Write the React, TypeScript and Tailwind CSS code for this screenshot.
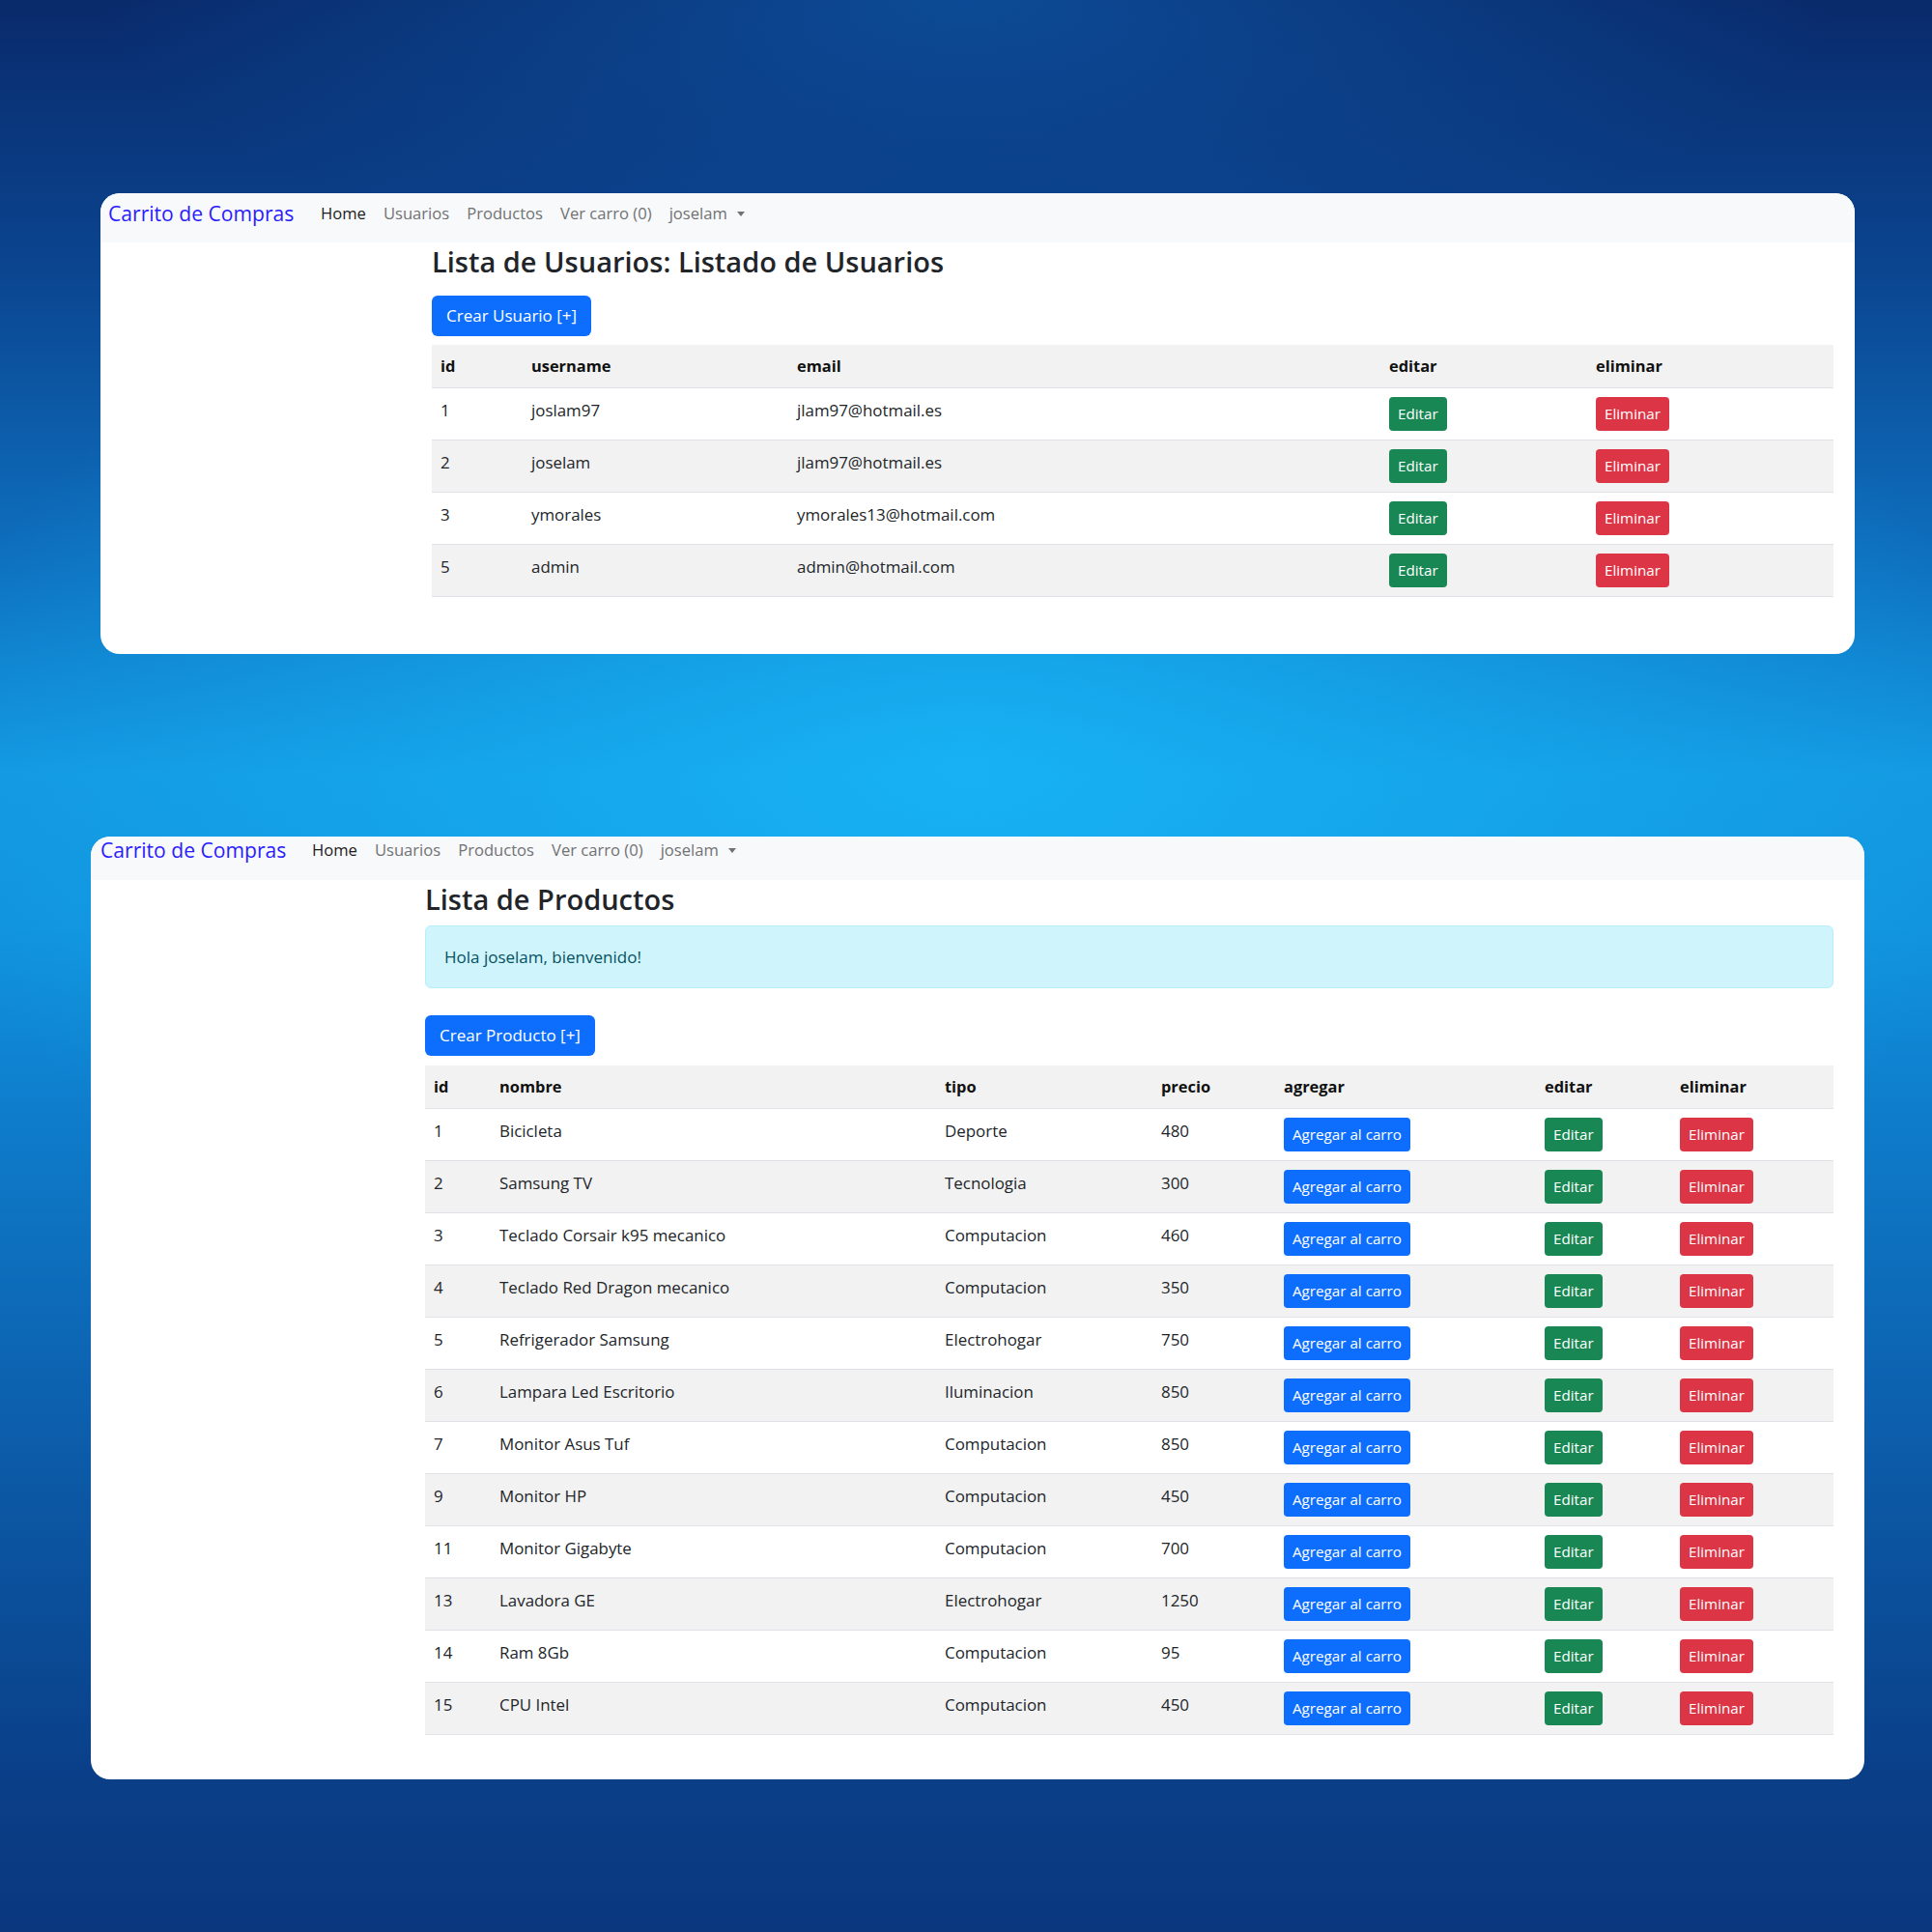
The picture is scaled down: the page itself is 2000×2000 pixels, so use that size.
import React from "react";

const users: string[][] = [
  ["1", "joslam97", "jlam97@hotmail.es"],
  ["2", "joselam", "jlam97@hotmail.es"],
  ["3", "ymorales", "ymorales13@hotmail.com"],
  ["5", "admin", "admin@hotmail.com"],
];

const products: string[][] = [
  ["1", "Bicicleta", "Deporte", "480"],
  ["2", "Samsung TV", "Tecnologia", "300"],
  ["3", "Teclado Corsair k95 mecanico", "Computacion", "460"],
  ["4", "Teclado Red Dragon mecanico", "Computacion", "350"],
  ["5", "Refrigerador Samsung", "Electrohogar", "750"],
  ["6", "Lampara Led Escritorio", "Iluminacion", "850"],
  ["7", "Monitor Asus Tuf", "Computacion", "850"],
  ["9", "Monitor HP", "Computacion", "450"],
  ["11", "Monitor Gigabyte", "Computacion", "700"],
  ["13", "Lavadora GE", "Electrohogar", "1250"],
  ["14", "Ram 8Gb", "Computacion", "95"],
  ["15", "CPU Intel", "Computacion", "450"],
];

function NavLinks() {
  return (
    <div className="flex items-center text-[16.6px] leading-[28px]">
      <span className="px-[9px] text-[#1c1c1c]">Home</span>
      <span className="px-[9px] text-[#707274]">Usuarios</span>
      <span className="px-[9px] text-[#707274]">Productos</span>
      <span className="px-[9px] text-[#707274]">Ver carro (0)</span>
      <span className="px-[9px] text-[#707274] flex items-center">
        joselam
        <span className="ml-[10px] mt-[1px] w-0 h-0 border-l-[4px] border-r-[4px] border-t-[5px] border-l-transparent border-r-transparent border-t-[#707274]"></span>
      </span>
    </div>
  );
}

function SmBtn({ label, cls }: { label: string; cls: string }) {
  return (
    <span className={"inline-flex h-[35px] items-center justify-center rounded-[4px] px-[9px] text-[15.2px] text-white " + cls}>
      {label}
    </span>
  );
}

export default function App() {
  return (
    <div className="w-[2000px] h-[2000px] overflow-hidden flex flex-col font-['Open_Sans',sans-serif] text-[#212529] bg-[radial-gradient(ellipse_45%_14%_at_50%_0%,rgba(14,86,164,0.75),rgba(14,86,164,0)_100%),radial-gradient(ellipse_55%_30%_at_50%_40%,rgba(24,182,246,0.85),rgba(24,182,246,0)_100%),linear-gradient(180deg,#092a6b_0%,#0b4590_14%,#0e73c2_30%,#1398e0_40%,#1193dd_48%,#0e7ccb_58%,#0c5aa7_76%,#0a3f88_92%,#0a377e_100%)]">
      {/* Card 1: usuarios */}
      <div className="ml-[104px] mt-[200px] w-[1816px] h-[477px] shrink-0 bg-white rounded-[20px] overflow-hidden flex flex-col">
        <nav className="h-[51px] shrink-0 bg-[#f8f9fa] flex items-start pt-[7px] pl-[8px]">
          <div className="w-[211px] shrink-0 text-[21.1px] leading-[28px] text-[#2a1cff]">Carrito de Compras</div>
          <NavLinks />
        </nav>
        <div className="pl-[343px] pr-[22px] flex flex-col">
          <h1 className="mt-[4px] mb-[19px] text-[29px] leading-[32px] font-semibold text-[#212529]">
            Lista de Usuarios: Listado de Usuarios
          </h1>
          <div>
            <span className="inline-flex h-[42px] items-center rounded-[6px] bg-[#0d6efd] px-[15px] text-[17px] text-white">
              Crear Usuario [+]
            </span>
          </div>
          <div className="mt-[9px] text-[16.9px]">
            <div className="grid grid-cols-[94px_275px_613px_214px_1fr] h-[45px] items-center bg-[#f2f2f2] border-b border-[#dee2e6] font-bold text-[16.4px] text-[#111]">
              <div className="px-[9px]">id</div>
              <div className="px-[9px]">username</div>
              <div className="px-[9px]">email</div>
              <div className="px-[9px]">editar</div>
              <div className="px-[9px]">eliminar</div>
            </div>
            {users.map((u, i) => (
              <div
                key={u[0]}
                className={
                  "grid grid-cols-[94px_275px_613px_214px_1fr] h-[54px] border-b border-[#dee2e6] " +
                  (i % 2 === 1 ? "bg-[#f2f2f2]" : "bg-white")
                }
              >
                <div className="px-[9px] pt-[9px] leading-[27px]">{u[0]}</div>
                <div className="px-[9px] pt-[9px] leading-[27px]">{u[1]}</div>
                <div className="px-[9px] pt-[9px] leading-[27px]">{u[2]}</div>
                <div className="px-[9px] pt-[9px]">
                  <SmBtn label="Editar" cls="bg-[#198754]" />
                </div>
                <div className="px-[9px] pt-[9px]">
                  <SmBtn label="Eliminar" cls="bg-[#dc3545]" />
                </div>
              </div>
            ))}
          </div>
        </div>
      </div>

      {/* Card 2: productos */}
      <div className="ml-[94px] mt-[189px] w-[1836px] h-[976px] shrink-0 bg-white rounded-[20px] overflow-hidden flex flex-col">
        <nav className="h-[45px] shrink-0 bg-[#f8f9fa] flex items-start pt-0 pl-[10px]">
          <div className="w-[210px] shrink-0 text-[21.1px] leading-[28px] text-[#2a1cff]">Carrito de Compras</div>
          <NavLinks />
        </nav>
        <div className="pl-[346px] pr-[32px] flex flex-col">
          <h1 className="mt-[4px] mb-[11px] text-[29px] leading-[32px] font-semibold text-[#212529]">Lista de Productos</h1>
          <div className="h-[65px] rounded-[6px] border border-[#b6effb] bg-[#cff4fc] px-[19px] flex items-center text-[17px] text-[#055160]">
            Hola joselam, bienvenido!
          </div>
          <div className="mt-[28px]">
            <span className="inline-flex h-[42px] items-center rounded-[6px] bg-[#0d6efd] px-[15px] text-[17px] text-white">
              Crear Producto [+]
            </span>
          </div>
          <div className="mt-[10px] text-[16.9px]">
            <div className="grid grid-cols-[68px_461px_224px_127px_270px_140px_1fr] h-[45px] items-center bg-[#f2f2f2] border-b border-[#dee2e6] font-bold text-[16.4px] text-[#111]">
              <div className="px-[9px]">id</div>
              <div className="px-[9px]">nombre</div>
              <div className="px-[9px]">tipo</div>
              <div className="px-[9px]">precio</div>
              <div className="px-[9px]">agregar</div>
              <div className="px-[9px]">editar</div>
              <div className="px-[9px]">eliminar</div>
            </div>
            {products.map((p, i) => (
              <div
                key={p[0]}
                className={
                  "grid grid-cols-[68px_461px_224px_127px_270px_140px_1fr] h-[54px] border-b border-[#dee2e6] " +
                  (i % 2 === 1 ? "bg-[#f2f2f2]" : "bg-white")
                }
              >
                <div className="px-[9px] pt-[9px] leading-[27px]">{p[0]}</div>
                <div className="px-[9px] pt-[9px] leading-[27px]">{p[1]}</div>
                <div className="px-[9px] pt-[9px] leading-[27px]">{p[2]}</div>
                <div className="px-[9px] pt-[9px] leading-[27px]">{p[3]}</div>
                <div className="px-[9px] pt-[9px]">
                  <SmBtn label="Agregar al carro" cls="bg-[#0d6efd]" />
                </div>
                <div className="px-[9px] pt-[9px]">
                  <SmBtn label="Editar" cls="bg-[#198754]" />
                </div>
                <div className="px-[9px] pt-[9px]">
                  <SmBtn label="Eliminar" cls="bg-[#dc3545]" />
                </div>
              </div>
            ))}
          </div>
        </div>
      </div>
    </div>
  );
}
